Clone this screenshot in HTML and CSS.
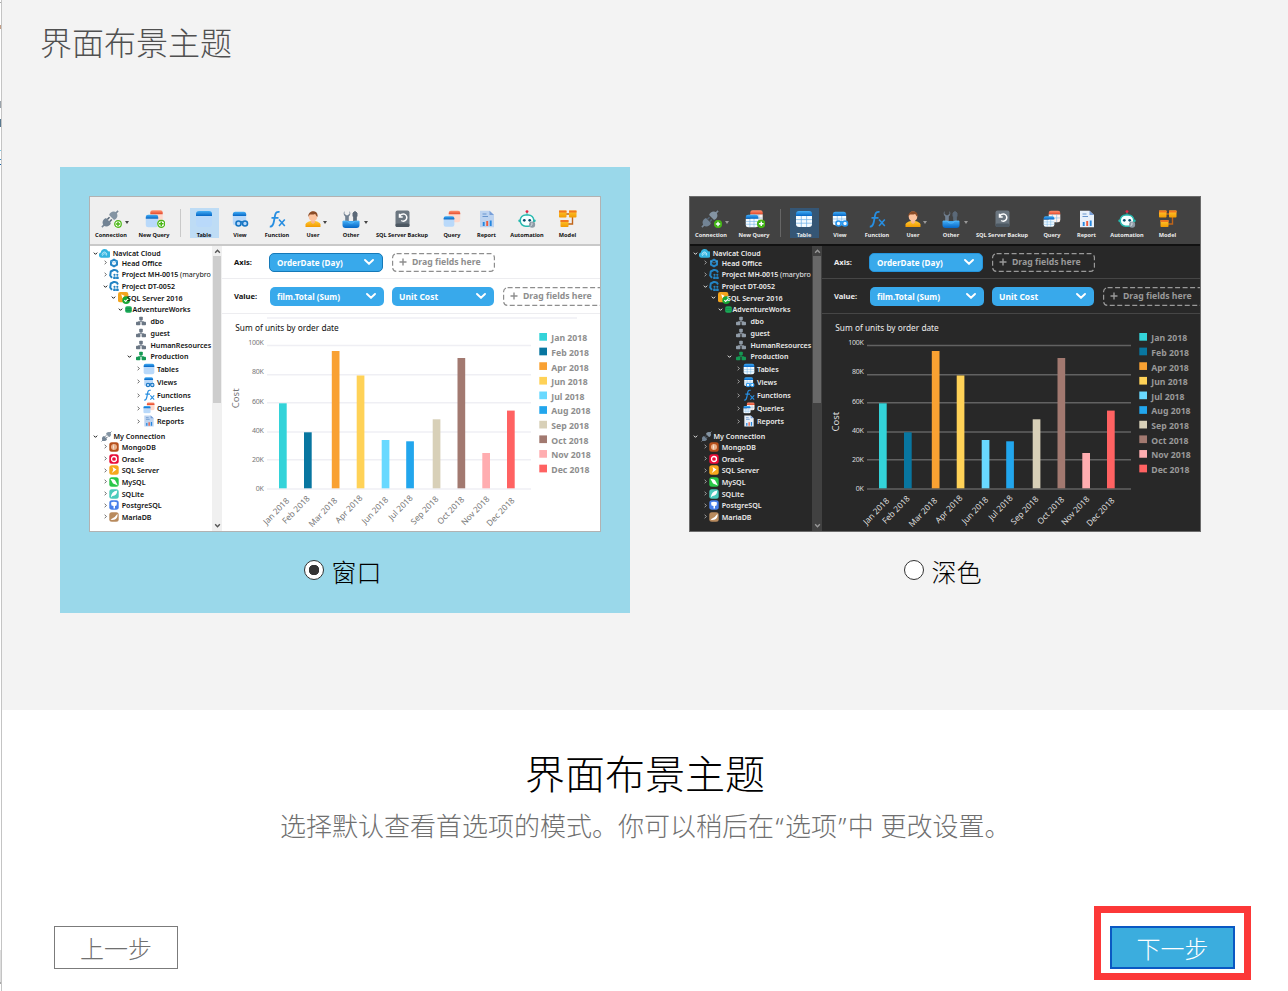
FILE: index.html
```html
<!DOCTYPE html>
<html lang="zh-CN">
<head>
<meta charset="utf-8">
<title>界面布景主题</title>
<link rel="stylesheet" href="styles.css">
</head>
<body>
<svg class="sprite" aria-hidden="true">
  <defs>
    <linearGradient id="g-blue" x1="0" y1="0" x2="0" y2="1"><stop offset="0" stop-color="#43adf5"/><stop offset="1" stop-color="#0566c5"/></linearGradient>
    <linearGradient id="g-red" x1="0" y1="0" x2="0" y2="1"><stop offset="0" stop-color="#ff9272"/><stop offset="1" stop-color="#e54b2d"/></linearGradient>
    <linearGradient id="g-gold" x1="0" y1="0" x2="0" y2="1"><stop offset="0" stop-color="#ffc935"/><stop offset="1" stop-color="#f29a00"/></linearGradient>
  </defs>
  <symbol id="plug" viewBox="0 0 20 20">
    <path d="M1 19 5 15M15 5 19 1" stroke="#7a8998" stroke-width="1.800"/>
    <path d="M3 17.500C0 13 3 10 5.500 9L11 14.500C10 18 6 19.500 3 17.500Z" fill="#728394"/>
    <path d="M17 2.500C20 7 17 10 14.500 11L9 5.500C10 2 14 .5 17 2.500Z" fill="#8494a3"/>
    <path d="M7 10.500 9.500 8M9.500 13 12 10.500" stroke="#566575" stroke-width="1.800"/>
  </symbol>
  <symbol id="plus" viewBox="0 0 8 8"><circle cx="4" cy="4" r="4" class="plus-bg"/><circle cx="4" cy="4" r="3.300" class="plus-ring"/><path d="M4 1.800V6.200M1.800 4H6.200" class="plus-mark"/></symbol>
  <symbol id="connection" viewBox="0 0 22 18"><use href="#plug" x="0" y="0" width="18" height="18"/><use href="#plus" x="13" y="10" width="8" height="8"/></symbol>
  <symbol id="table" viewBox="0 0 18 18">
    <path d="M1 6H17V14Q17 17 14 17H4Q1 17 1 14Z" class="sheet"/><path d="M6.300 6V17M11.600 6V17M1 9.600H17M1 13.200H17" class="sheet-lines"/>
    <path d="M1 6V4Q1 1 4 1H14Q17 1 17 4V6Z" fill="url(#g-blue)"/>
  </symbol>
  <symbol id="redtable" viewBox="0 0 18 18">
    <path d="M1 6H17V14Q17 17 14 17H4Q1 17 1 14Z" class="redsheet"/><path d="M1 6V4Q1 1 4 1H14Q17 1 17 4V6Z" fill="url(#g-red)"/><path d="M6 6V17M12 6V17M1 11H17" class="sheet-lines"/>
  </symbol>
  <symbol id="query" viewBox="0 0 18 18"><use href="#redtable" x="5" y="0" width="13" height="13"/><use href="#table" x="0" y="5.500" width="12" height="12"/></symbol>
  <symbol id="newquery" viewBox="0 0 20 18"><use href="#redtable" x="4.500" y="-.5" width="14" height="14"/><use href="#table" x="0" y="4" width="14" height="14"/><use href="#plus" x="12" y="9.500" width="8.500" height="8.500"/></symbol>
  <symbol id="view" viewBox="0 0 18 18"><use href="#table" x="1" y="1" width="15" height="15"/><circle cx="7.500" cy="13.500" r="2.500" class="glass"/><circle cx="14" cy="13.500" r="2.500" class="glass"/><path d="M9.600 12.400Q10.700 11.300 11.900 12.400" class="glass"/></symbol>
  <symbol id="fx" viewBox="0 0 18 18"><path d="M1.800 16.500C5 17 5.500 14 6 11L7.200 4.700Q8 1.200 11.500 2M3.500 7.800H10.500" fill="none" stroke="#278ee1" stroke-width="1.800"/><path d="M11 9.500 16.800 16M16.800 9.500 11 16" stroke="#278ee1" stroke-width="1.600"/></symbol>
  <symbol id="user" viewBox="0 0 18 18"><path d="M1.500 17V14.500Q2 12 7 11H11Q16 12 16.500 14.500V17Z" fill="url(#g-gold)"/><path d="M7 9H11V12.500L9 14 7 12.500Z" fill="#f6b38c"/><ellipse cx="9" cy="6.500" rx="4.300" ry="5" fill="#fcc39e"/><path d="M4.400 6.800C3.500 0 14.500-1 13.600 6.800 12 6.500 12 4.500 11 4 9 5 6 4.300 5.800 4.500Z" fill="#8b4c27"/></symbol>
  <symbol id="other" viewBox="0 0 18 18"><path d="M2.500 1V4L5 5.500 7.500 4V1Q9.500 4 6.800 6.500V14H3.200V6.500Q.5 4 2.500 1Z" fill="#718091"/><path d="M11 3Q13 0 15 3V6.500H14.300V14H11.700V6.500H11Z" fill="#5b6978" stroke="#5b6978"/><path d="M.5 11H17.500V15Q17.500 18 14.500 18H3.500Q.5 18 .5 15Z" fill="url(#g-blue)"/><path d="M1 11H5.500Q6 13 8 13H10Q12 13 12.500 11H17" fill="none" stroke="#57bdff" stroke-width=".8"/></symbol>
  <symbol id="backup" viewBox="0 0 18 18"><rect x="2.500" y=".5" width="14" height="16.500" rx="2" fill="#6b7680"/><rect x="2.500" y="13.500" width="14" height="3.500" rx="1.500" fill="#4d5862"/><path d="M6.500 3.700V7H9.700M6.700 6.800A3.600 3.600 0 1 1 8.200 10.500" fill="none" stroke="#fff" stroke-width="1.500"/></symbol>
  <symbol id="report" viewBox="0 0 18 18"><path d="M2 .8H11.500L16 5V17.300H2Z" class="paper"/><path d="M11.500 .8V5H16Z" fill="#789fd8"/><path d="M4.500 4H8.500M4.500 6.500H10" stroke="#6896ce" stroke-width="1.200"/><path d="M5.700 12V16M12.700 10.500V16" stroke="#2587df" stroke-width="1.900"/><path d="M9.200 11V16" stroke="#ef5b3c" stroke-width="1.900"/></symbol>
  <symbol id="robot" viewBox="0 0 20 20"><path d="M10 2V6" stroke="#26b7ad"/><circle cx="10" cy="1.800" r="1.600" fill="#e52543"/><circle cx="1.800" cy="12" r="1.500" fill="#27b9af"/><circle cx="18.200" cy="12" r="1.500" fill="#27b9af"/><rect x="2.500" y="5.500" width="15" height="12.500" rx="6" fill="#f7ffff" stroke="#27b9af" stroke-width="1.600"/><circle cx="7" cy="11.500" r="1.500" fill="#094b6b"/><circle cx="13" cy="11.500" r="1.500" fill="#094b6b"/><circle cx="15.700" cy="16.300" r="3.400" fill="#8d9ba6"/><path d="M15.500 14V16.500L13.900 17.700" stroke="#e2e9ed" fill="none"/></symbol>
  <symbol id="model" viewBox="0 0 18 18"><path d="M4 4H13M13.500 5V14H7" fill="none" stroke="#c16519" stroke-width="1.400"/><g fill="url(#g-gold)"><rect x="0" y=".5" width="7.500" height="7" rx=".8"/><rect x="10" y=".5" width="7.500" height="7" rx=".8"/><rect x="1.500" y="10" width="8" height="7" rx=".8"/></g><path d="M0 1.500H7.500M10 1.500H17.500M1.500 11H9.500" stroke="#f17620" stroke-width="2"/></symbol>
  <symbol id="cloud" viewBox="0 0 12 12"><path d="M3 10.500A2.800 2.800 0 0 1 2 5 4.200 4.200 0 0 1 10 3.500 3.500 3.500 0 0 1 10 10.500Z" fill="#35b4df"/><path d="M4 8.500A2.500 2.500 0 1 1 8 8.300M5.500 7.500A1 1 0 1 1 7 7" fill="none" stroke="#d9f6ff" stroke-width=".8"/></symbol>
  <symbol id="office" viewBox="0 0 10 10"><path d="M5 .5 9 2.700V7.300L5 9.500 1 7.300V2.700Z" fill="#2786c6"/><circle cx="5" cy="5" r="2.100" class="hole"/><path d="M1 2.700 5 5 9 2.700" stroke="#65b8e4" fill="none" stroke-width=".5"/></symbol>
  <symbol id="project" viewBox="0 0 10 10"><path d="M9 3.500 7.800 1.500 5 .8 1.800 2.500 1.200 6.500 3 8.800" fill="none" stroke="#2384c4" stroke-width="2"/><circle cx="5.500" cy="5.800" r="1.100" fill="#2384c4"/><circle cx="8.300" cy="5.800" r="1.100" fill="#2384c4"/><path d="M4.200 10V8Q5.500 6.300 6.800 8V10ZM7.100 10V8Q8.400 6.300 9.700 8V10Z" fill="#2384c4"/></symbol>
  <symbol id="sqlon" viewBox="0 0 11 11"><rect x="0" y="0" width="9.500" height="9.500" rx="2" fill="#f4a51d"/><path d="M3 2 6 3.500 4 6Z" fill="#fff"/><circle cx="7.500" cy="7.500" r="3.500" fill="#18a835"/><path d="M5.800 7.500 7 8.700 9.300 6.300" fill="none" stroke="#fff"/></symbol>
  <symbol id="database" viewBox="0 0 8 8"><rect x=".2" y=".2" width="7.600" height="7.600" rx="2" fill="#1cab58"/><path d="M.8 3H7.200M.8 5.200H7.200" stroke="#087d42" stroke-width=".5"/></symbol>
  <symbol id="schema" viewBox="0 0 10 10"><path d="M5 4V6M2.500 7V5.500H7.500V7" stroke="currentColor" fill="none" stroke-width=".7"/><rect x="3.200" y=".8" width="3.600" height="3.600" rx=".8" fill="currentColor"/><rect x="0" y="5.800" width="4.400" height="3.500" rx=".8" fill="currentColor"/><rect x="5.600" y="5.800" width="4.400" height="3.500" rx=".8" fill="currentColor"/></symbol>
  <symbol id="mongo" viewBox="0 0 10 10"><rect x=".3" y=".3" width="9.400" height="9.400" rx="2.500" fill="#b6501c"/><circle cx="5" cy="5" r="3" fill="#e9b18b"/><path d="M5 1.800Q3.500 5 5 8.200" fill="#fff"/></symbol>
  <symbol id="oracle" viewBox="0 0 10 10"><rect x=".3" y=".3" width="9.400" height="9.400" rx="2.500" fill="#e90c37"/><circle cx="5" cy="5" r="2.500" fill="none" stroke="#fff" stroke-width="1.300"/></symbol>
  <symbol id="mssql" viewBox="0 0 10 10"><rect x=".3" y=".3" width="9.400" height="9.400" rx="2.500" fill="#f7a81c"/><path d="M3.500 2 7.500 4.500 5.500 6 2.800 8 4.300 5Z" fill="#fff"/></symbol>
  <symbol id="mysql" viewBox="0 0 10 10"><rect x=".3" y=".3" width="9.400" height="9.400" rx="2.500" fill="#29c849"/><path d="M1.500 2Q6 1.500 7 5L8.800 8.500 6.500 7.500 4 6.500Z" fill="#fff"/></symbol>
  <symbol id="sqlite" viewBox="0 0 10 10"><rect x=".3" y=".3" width="9.400" height="9.400" rx="2.500" fill="#4bcbbb"/><path d="M2 8.500Q2 2.500 8.300 1.500 8 6.500 3.500 7Z" fill="#fff"/></symbol>
  <symbol id="postgres" viewBox="0 0 10 10"><rect x=".3" y=".3" width="9.400" height="9.400" rx="2.500" fill="#477fea"/><path d="M2 2.500Q5 1 8 2.500L7.500 5.500 6 6V8.500H4.500V6L2.500 5.500Z" fill="#fff"/></symbol>
  <symbol id="maria" viewBox="0 0 10 10"><rect x=".3" y=".3" width="9.400" height="9.400" rx="2.500" fill="#b88a5d"/><path d="M1.500 7.500Q6 6 8.500 1.800 9 6 6 7.500L3 8Z" fill="#fff"/></symbol>
  <symbol id="down" viewBox="0 0 6 6"><path d="M1 2 3 4 5 2" fill="none" stroke="currentColor" stroke-width="1.200"/></symbol>
  <symbol id="right" viewBox="0 0 6 6"><path d="M2 .8 4 3 2 5.200" fill="none" stroke="currentColor" stroke-width=".9" opacity=".8"/></symbol>
  <symbol id="up" viewBox="0 0 6 6"><path d="M1 4 3 2 5 4" fill="none" stroke="currentColor" stroke-width="1.200"/></symbol>
  <symbol id="chevron" viewBox="0 0 10 6"><path d="M1 1 5 4.800 9 1" fill="none" stroke="currentColor" stroke-width="1.900" stroke-linecap="round"/></symbol>
</svg>

<div class="wizard">
  <main class="stage">
    <h1 class="stage-title">界面布景主题</h1>
    <div class="themes">
      <label class="theme theme-selected">
        <div class="preview light" data-cost-y="398.300"></div>
        <span class="choice"><input class="radio" type="radio" name="theme" checked>窗口</span>
      </label>
      <label class="theme">
        <div class="preview dark" data-cost-y="421.700"></div>
        <span class="choice"><input class="radio" type="radio" name="theme">深色</span>
      </label>
    </div>
  </main>
  <footer class="footer">
    <h2 class="footer-title">界面布景主题</h2>
    <p class="footer-text">选择默认查看首选项的模式。你可以稍后在<span class="quote">“</span>选项<span class="quote">”</span>中 更改设置。</p>
    <div class="actions">
      <button class="button button-back">上一步</button>
      <div class="highlight"><button class="button button-next">下一步</button></div>
    </div>
  </footer>
</div>
<script src="preview.js"></script>
</body>
</html>
```
FILE: styles.css
```css
* { box-sizing: border-box; }
body { margin: 0; background: #fff; font-family: "Noto Sans", "Noto Sans CJK SC", sans-serif; }
.sprite { position: absolute; width: 0; height: 0; }

.wizard {
  width: 1288px; height: 991px; padding-left: 2px; overflow: hidden;
  background:
    linear-gradient(#c4c4c4, #c4c4c4) 1px 0 / 1px 100% no-repeat,
    linear-gradient(#fff 0 2px, #aaa 2px 3px, #fff 3px 25px, #c49f88 25px 29px, #fff 29px 101px, #9aa3ab 101px 108px, #fff 108px 119px, #58788f 119px 127px, #fff 127px 150px, #7bcbea 150px 151px, #fff 151px 159px, #3c8fc4 159px 160px, #fff 160px 164px, #1462a5 164px 165px, #fff 165px 950px, #ddd 950px 982px, #aaa 982px 984px, #fff 984px) 0 0 / 1px 100% no-repeat;
}
.stage { height: 710px; background: #f3f3f3; padding: 19px 0 0 58px; }
.stage-title { margin: 0 0 104px -20px; font: 300 32px/44px "Noto Sans CJK SC", sans-serif; color: #505050; }
.themes { display: flex; gap: 30px; }
.theme { width: 570px; height: 446px; padding: 29px; display: flex; flex-direction: column; align-items: center; }
.theme-selected { background: #9ad8ea; }
.choice { display: flex; align-items: center; gap: 7px; margin: 20px 0 0 -4px; font: 300 25px/38px "Noto Sans CJK SC", sans-serif; color: #000; }
.radio { appearance: none; width: 20px; height: 20px; margin: 0 0 2px; border: 1px solid #333; border-radius: 50%; background: #fff; }
.radio:checked { background: radial-gradient(circle, #333 0 5px, #fff 5.500px); }

.footer { height: 281px; background: #fff; display: flex; flex-direction: column; }
.footer-title { margin: 34px 0 0; text-align: center; font: 300 40px/56px "Noto Sans CJK SC", sans-serif; color: #000; }
.footer-text { margin: 7px 0 0 278px; font: 300 26px/38px "Noto Sans", "Noto Sans CJK SC", sans-serif; color: #707070; white-space: nowrap; }
.quote { margin: 0 1.400px; }
.actions { display: flex; justify-content: space-between; align-items: center; margin: 61px 37px 0 52px; }
.button { height: 43px; padding: 0; font: 300 24px/36px "Noto Sans CJK SC", sans-serif; }
.button-back { width: 124px; border: 1px solid #7b7b7b; background: #fff; color: #707070; margin-top: 9px; }
.button-next { width: 125px; border: 2px solid #0a58c3; background: #3badde; color: #fff; }
.highlight { border: 7px solid #fc3838; width: 157px; height: 74px; padding: 13px 9px 0; }

.preview {
  --frame: #b2b2b2; --bar: #efefef; --bar-line: #c9c9c9; --bg: #fff; --fg: #111; --muted: #8e8e8e;
  --line: #ededf0; --grid: #efeff4; --track: #f0f0f0; --thumb: #cdcdcd; --active: #bedcf5; --caret: #444;
  --axis: #777; --pill-edge: #1579b8; --cell: #b9d9fa; --cell-line: transparent;
  --red-cell: #ffd9cc; --paper: #bcd3f0; --glass: #1675c2; --hole: #fff; --schema: #6b7785; --plus-bg: #fff; --plus-mark: #4bb716;
  width: 512px; height: 336px; flex: none; border: 1px solid var(--frame); background: var(--bg); color: var(--fg); overflow: hidden;
}
.dark {
  --frame: #6b6b6b; --bar: #424242; --bar-line: #111; --bg: #282828; --fg: #ececec; --muted: #999;
  --line: #464646; --grid: #626262; --track: #414141; --thumb: #686868; --active: #355675; --caret: #999;
  --axis: #ddd; --pill-edge: #2495dd; --cell: #f5fbff; --cell-line: #68aee5;
  --red-cell: #fff1eb; --paper: #e7f0fa; --glass: #2695ed; --hole: #282828; --schema: #909ba7; --plus-bg: #35ad17; --plus-mark: #fff;
}
.sheet { fill: var(--cell); }
.redsheet { fill: var(--red-cell); }
.sheet-lines { fill: none; stroke: var(--cell-line); stroke-width: .7; }
.paper { fill: var(--paper); }
.hole { fill: var(--hole); }
.glass { fill: var(--cell); stroke: var(--glass); stroke-width: 1.600; }
.plus-bg { fill: var(--plus-bg); }
.plus-ring { fill: none; stroke: #4bb716; stroke-width: 1.200; }
.plus-mark { fill: none; stroke: var(--plus-mark); stroke-width: 1.400; }

.toolbar {
  height: 49px; background: var(--bar); border-bottom: 2px solid var(--bar-line);
  display: grid; grid-template-columns: 42px 44px 9px 38px 34px 40px 32px 44px 58px 42px 27px 54px 27px;
  justify-items: center; padding-top: 11px;
}
.tool { position: relative; height: 30px; display: flex; flex-direction: column; align-items: center; padding-top: 2px; }
.tool-active { width: 29px; background: var(--active); }
.tool-icon { width: 18px; height: 18px; flex: none; }
.tool-wide { width: 22px; margin-left: 3px; }
.tool-large { width: 20px; margin-left: 2px; }
.tool-label { font-size: 5.600px; line-height: 8px; margin-top: 2.500px; font-weight: 700; white-space: nowrap; }
.caret { position: absolute; top: 13px; left: calc(50% + 13px); border: 2px solid transparent; border-top: 3px solid var(--caret); border-bottom: 0; }
.caret-near { left: calc(50% + 10px); }
.caret-far { left: calc(50% + 14.500px); }
.tool-separator { width: 1px; height: 28px; margin-top: 1px; background: var(--bar-line); }
.dark .tool-separator { background: #666; }

.workspace { display: flex; height: 285px; }
.tree { width: 122px; overflow: hidden; flex: none; font-size: 7.100px; font-weight: 600; }
.row { display: flex; align-items: center; height: 11.700px; white-space: nowrap; }
.row-arrow { width: 5px; height: 5px; flex: none; }
.row-icon { width: 10px; height: 10px; flex: none; color: var(--schema); }
.row-note { font-weight: 400; }
.depth-0 { height: 10.850px; padding: 3.400px 0 0 3px; }
.depth-0 .row-icon { width: 11px; height: 11px; margin: 0 2.500px 0 1.200px; }
.depth-1 { padding-left: 12.500px; }
.depth-1 .row-icon { margin: 0 2.700px 0 1.500px; }
.depth-2 { padding-left: 20.500px; }
.depth-2 .row-icon { width: 12px; height: 12px; margin: 0 -3px 0 2.500px; }
.depth-3 { padding-left: 28px; }
.depth-3 .row-icon { width: 7px; height: 7px; margin: 0 .5px 0 2px; }
.depth-4 { padding-left: 36.500px; }
.depth-4 .row-icon { margin: 0 4.500px; }
.depth-5 { padding-left: 46px; height: 13.200px; }
.depth-5 .row-icon { width: 12px; height: 12px; margin: 0 2px 0 2px; }
.row-root { height: 13px; padding-top: 4px; }
.row-root .row-icon { margin: 0 2px 0 2.500px; }
.green .row-icon { color: #159953; }

.scroll { width: 10px; flex: none; background: var(--track); display: flex; flex-direction: column; align-items: center; padding: 2px 0; color: var(--muted); }
.scroll-arrow { width: 7px; height: 7px; }
.light .scroll-arrow { color: #555; }
.scroll-thumb { width: 8px; height: 147px; background: var(--thumb); margin: 1px 0 auto; }

.panel { flex: 1; min-width: 0; display: flex; flex-direction: column; }
.filter { display: flex; align-items: center; flex: none; padding-left: 12px; overflow: hidden; border-bottom: 1px solid var(--line); font-weight: 700; font-size: 8.150px; font-variant-ligatures: none; }
.filter-axis { height: 33px; }
.filter-value { height: 35px; }
.filter-name { width: 36px; font-size: 7.600px; flex: none; }
.pill { height: 19px; flex: none; border-radius: 5px; background: #38a9eb; color: #fff; display: flex; align-items: center; justify-content: space-between; padding: 0 8px 0 7px; white-space: nowrap; }
.pill-long { width: 114px; }
.pill-short { width: 102px; margin-left: 8px; font-size: 8.500px; }
.filter-axis .pill { border: 1px solid var(--pill-edge); margin-left: -1px; }
.chevron { width: 10px; height: 6px; }
.drop { width: 103px; height: 19px; flex: none; margin-left: 9px; color: var(--muted); white-space: nowrap; position: relative; display: flex; align-items: center; gap: 5px; padding-left: 7px; font-size: 8.700px; }
.drop-frame { position: absolute; inset: 0; width: 103px; height: 19px; }
.drop-frame rect { fill: none; stroke: var(--muted); stroke-width: 1.200; stroke-dasharray: 5 2.500; }
.drop-plus { width: 8px; height: 8px; stroke: var(--muted); stroke-width: 1.400; }

.chart { width: 378px; height: 217px; flex: none; font-size: 8.300px; fill: var(--axis); }
.chart-line { stroke: var(--grid); stroke-width: 1.500; }
.chart-title { fill: var(--fg); }
.chart-scale { font-size: 7px; text-anchor: end; letter-spacing: -.3px; }
.chart-date { text-anchor: end; }
.chart-cost { font-size: 9.500px; text-anchor: middle; }
.chart-legend { font-size: 8.700px; font-weight: 700; fill: var(--muted); }
.dark .chart-top { display: none; }
```
FILE: preview.js
```js
// icon, label, icon size, caret placement
const tools = [
  ['connection', 'Connection', 'wide', 'caret-far'], ['newquery', 'New Query', 'large'], null,
  ['table', 'Table', 'active'], ['view', 'View'], ['fx', 'Function'], ['user', 'User', '', 'caret-near'],
  ['other', 'Other', '', 'caret-mid'], ['backup', 'SQL Server Backup'], ['query', 'Query'],
  ['report', 'Report'], ['robot', 'Automation'], ['model', 'Model'],
];

// depth, arrow, icon, label, extra class
const rows = [
  [0, 'down', 'cloud', 'Navicat Cloud'],
  [1, 'right', 'office', 'Head Office'],
  [1, 'right', 'project', 'Project MH-0015 <span class="row-note">(marybro</span>'],
  [1, 'down', 'project', 'Project DT-0052'],
  [2, 'down', 'sqlon', 'SQL Server 2016'],
  [3, 'down', 'database', 'AdventureWorks'],
  [4, '', 'schema', 'dbo'], [4, '', 'schema', 'guest'], [4, '', 'schema', 'HumanResources'],
  [4, 'down', 'schema', 'Production', 'green'],
  [5, 'right', 'table', 'Tables'], [5, 'right', 'view', 'Views'], [5, 'right', 'fx', 'Functions'],
  [5, 'right', 'query', 'Queries'], [5, 'right', 'report', 'Reports'],
  [0, 'down', 'plug', 'My Connection', 'row-root'],
  [1, 'right', 'mongo', 'MongoDB'], [1, 'right', 'oracle', 'Oracle'], [1, 'right', 'mssql', 'SQL Server'],
  [1, 'right', 'mysql', 'MySQL'], [1, 'right', 'sqlite', 'SQLite'], [1, 'right', 'postgres', 'PostgreSQL'],
  [1, 'right', 'maria', 'MariaDB'],
];

// month, bar x, bar top, label end x, label end y, colour
const bars = [
  ['Jan', 279, 403.3, 289.7, 501.3, '#33d3d9'], ['Feb', 304, 432.3, 310.3, 499, '#0876a0'],
  ['Mar', 331.8, 351, 337.7, 501, '#f9a132'], ['Apr', 356.7, 375.5, 363, 498.6, '#ffd257'],
  ['Jun', 381.7, 440, 388.7, 500.3, '#69d9ff'], ['Jul', 406.2, 441.3, 413.3, 498.6, '#22a6ed'],
  ['Sep', 432.7, 419.3, 439, 499.6, '#d8d0b8'], ['Oct', 457.5, 358, 464.7, 500, '#a27970'],
  ['Nov', 482.3, 453, 490, 499.6, '#ffadb0'], ['Dec', 507, 410.6, 515, 501, '#ff6262'],
];
const legend = ['Jan', 'Feb', 'Apr', 'Jun', 'Jul', 'Aug', 'Sep', 'Oct', 'Nov', 'Dec'];
const scale = [[345.6, '100K'], [374.7, '80K'], [402.7, '60K'], [432, '40K'], [459.7, '20K'], [489, '0K']];

const icon = (id, cls) => `<svg class="${cls}">${id ? `<use href="#${id}"/>` : ''}</svg>`;

const toolbar = () => tools.map(t => t
  ? `<div class="tool ${t[2] === 'active' ? 'tool-active' : ''}">${icon(t[0], 'tool-icon' + (t[2] && t[2] !== 'active' ? ' tool-' + t[2] : ''))}<span class="tool-label">${t[1]}</span>${t[3] ? `<i class="caret ${t[3]}"></i>` : ''}</div>`
  : '<div class="tool-separator"></div>').join('');

const tree = () => rows.map(([depth, arrow, id, label, extra = '']) =>
  `<div class="row depth-${depth} ${extra}">${icon(arrow, 'row-arrow')}${icon(id, 'row-icon')}<span>${label}</span></div>`).join('');

const pill = (text, size) => `<div class="pill pill-${size}">${text}${icon('chevron', 'chevron')}</div>`;
const drop = () => `<div class="drop"><svg class="drop-frame"><rect x=".6" y=".6" width="101.800" height="17.800" rx="4"/></svg><svg class="drop-plus" viewBox="0 0 8 8"><path d="M4 .5V7.500M.5 4H7.500"/></svg>Drag fields here</div>`;

const chart = costY => `<svg class="chart" viewBox="222 314 378 217">
  <path class="chart-line chart-top" d="M267 318H577"/>
  <text class="chart-title" x="235.300" y="330.500" textLength="103.500">Sum of units by order date</text>
  ${scale.map(([y, t], i) => `<path class="chart-line" d="M267 ${y}H531"/><text class="chart-scale" x="263.500" y="${342.700 + i * 29.200 + 2.500}">${t}</text>`).join('')}
  <text class="chart-cost" transform="translate(239 ${costY}) rotate(-90)">Cost</text>
  ${bars.map(([m, x, top, lx, ly, c]) => `<rect x="${x}" y="${top}" width="7.700" height="${488.300 - top}" fill="${c}"/><text class="chart-date" transform="translate(${lx} ${ly}) rotate(-46)">${m} 2018</text>`).join('')}
  ${legend.map((m, i) => `<rect x="539.300" y="${333 + i * 14.630}" width="7.700" height="7.700" fill="${['#33d3d9', '#0876a0', '#f9a132', '#ffd257', '#69d9ff', '#22a6ed', '#d8d0b8', '#a27970', '#ffadb0', '#ff6262'][i]}"/><text class="chart-legend" x="551.300" y="${341.300 + i * 14.630}">${m} 2018</text>`).join('')}
</svg>`;

document.querySelectorAll('.preview').forEach(el => {
  el.innerHTML = `<div class="toolbar">${toolbar()}</div>
  <div class="workspace">
    <div class="tree">${tree()}</div>
    <div class="scroll">${icon('up', 'scroll-arrow')}<div class="scroll-thumb"></div>${icon('down', 'scroll-arrow')}</div>
    <div class="panel">
      <div class="filter filter-axis"><span class="filter-name">Axis:</span>${pill('OrderDate (Day)', 'long')}${drop()}</div>
      <div class="filter filter-value"><span class="filter-name">Value:</span>${pill('film.Total (Sum)', 'long')}${pill('Unit Cost', 'short')}${drop()}</div>
      ${chart(el.dataset.costY)}
    </div>
  </div>`;
});
```
